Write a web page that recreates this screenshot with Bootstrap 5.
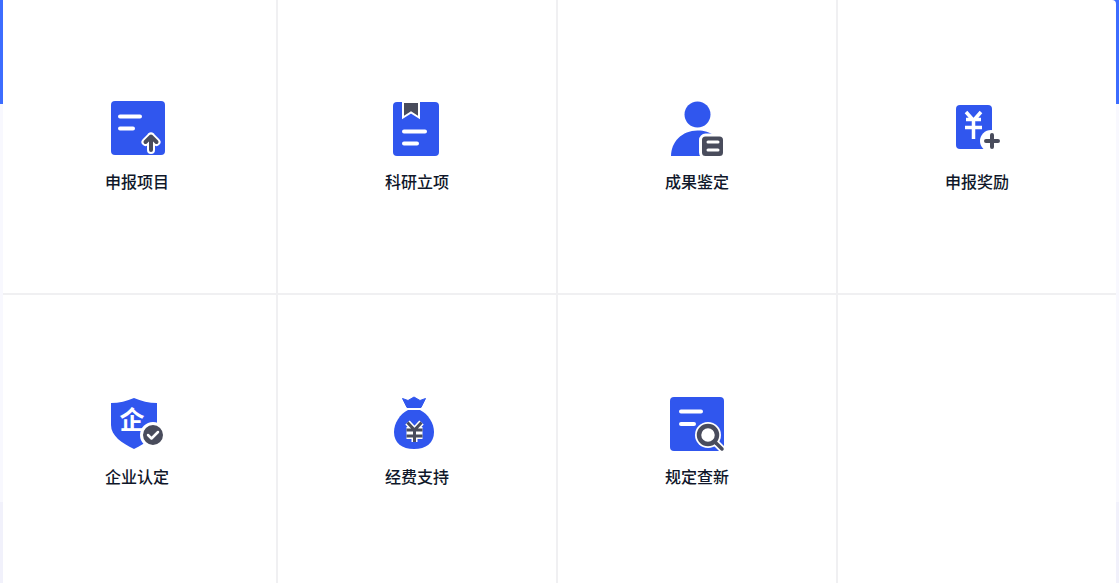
<!DOCTYPE html>
<html lang="zh-CN">
<head>
  <meta charset="UTF-8" />
  <title>申报入口</title>
  <meta name="viewport" content="width=device-width, initial-scale=1" />
  <link rel="stylesheet" href="https://cdn.jsdelivr.net/npm/bootstrap@5.3.0/dist/css/bootstrap.min.css" />
  <style>
    html, body { height: 100%; overflow: hidden; }
    body {
      background: linear-gradient(#3d6dff 104px, #f8f8fe 104px, #f8f8fe 502px, #f1f1fb 502px);
      font-family: "Noto Sans CJK SC", "Liberation Sans", sans-serif;
    }
    .entry-panel {
      height: 583px;
      margin: 0 3px;
      background: #fff;
      border-top-right-radius: 4px;
    }
    .entry-grid { width: 1120px; margin-left: -5px; }
    .entry-cell {
      width: 280px;
      height: 295px;
      padding-top: 96px;
      border-right: 2px solid #f0f0f2;
      border-bottom: 2px solid #f0f0f2;
    }
    .entry-cell svg { display: block; width: 64px; height: 64px; }
    .entry-name {
      margin-top: 9px;
      font-size: 16px;
      line-height: 24px;
      font-weight: 500;
      color: #0f172a;
    }
    .ic-blue { fill: #3056ee; }
    .ic-dark { fill: #494c5c; }
    .ic-line { stroke: #fff; stroke-width: 4; stroke-linecap: round; fill: none; }
    .ic-bar { stroke: #fff; stroke-width: 3; stroke-linecap: round; fill: none; }
    .ic-yen { stroke: #fff; stroke-width: 3.5; fill: none; }
    .ic-glyph { font: 700 25px "Noto Sans CJK SC", sans-serif; fill: #fff; text-anchor: middle; }
  </style>
</head>
<body>
  <div class="entry-panel overflow-hidden">
    <div class="entry-grid d-flex flex-wrap">

      <!-- 第一行 -->
      <div class="entry-cell d-flex flex-column align-items-center">
        <svg viewBox="105 96 64 64">
          <rect class="ic-blue" x="111" y="101" width="54" height="54" rx="4" />
          <path class="ic-line" d="M120 116.500h20M120 128.500h13" />
          <path d="M151 150V136.500M145.500 142l5.500-5.500 5.500 5.500" stroke="#fff" stroke-width="8" stroke-linecap="round" stroke-linejoin="round" fill="none" />
          <path d="M151 150V136.500M145.500 142l5.500-5.500 5.500 5.500" stroke="#494c5c" stroke-width="4" stroke-linecap="round" stroke-linejoin="round" fill="none" />
        </svg>
        <div class="entry-name">申报项目</div>
      </div>

      <div class="entry-cell d-flex flex-column align-items-center">
        <svg viewBox="385 96 64 64">
          <rect class="ic-blue" x="393" y="102" width="46" height="54" rx="4" />
          <path class="ic-dark" d="M403 102h16v15.500l-8-5-8 5z" stroke="#fff" stroke-width="2" />
          <path class="ic-line" d="M404 131.500h21M404 143.500h13" />
        </svg>
        <div class="entry-name">科研立项</div>
      </div>

      <div class="entry-cell d-flex flex-column align-items-center">
        <svg viewBox="665 96 64 64">
          <circle class="ic-blue" cx="697.500" cy="114.500" r="13" />
          <path class="ic-blue" d="M671 156c0-14 11-25.500 26.500-25.500 7 0 12 1.500 16.500 5V156z" />
          <rect class="ic-dark" x="700.500" y="135" width="24" height="22.500" rx="5" stroke="#fff" stroke-width="3" />
          <path class="ic-bar" d="M708 142h10M708 150h10" />
        </svg>
        <div class="entry-name">成果鉴定</div>
      </div>

      <div class="entry-cell d-flex flex-column align-items-center">
        <svg viewBox="945 96 64 64">
          <rect class="ic-blue" x="956" y="105" width="36" height="44" rx="4" />
          <path class="ic-yen" d="M966 112l7.500 8.500 7.500-8.500M966 119.500h15M965 127.500h17M973.500 120v19" />
          <circle cx="991" cy="141" r="11" fill="#fff" />
          <path d="M986 141h12M992 135v12" stroke="#494c5c" stroke-width="4" stroke-linecap="round" />
        </svg>
        <div class="entry-name">申报奖励</div>
      </div>

      <!-- 第二行 -->
      <div class="entry-cell d-flex flex-column align-items-center">
        <svg viewBox="105 391 64 64">
          <path class="ic-blue" d="M111 403c8 0 16-2 23-5 7 3 15 5 23 5v22c0 11-11 18-23 24-12-6-23-13-23-24z" />
          <text class="ic-glyph" x="132" y="429">企</text>
          <circle class="ic-dark" cx="153" cy="435" r="11.500" stroke="#fff" stroke-width="3" />
          <path d="M148 435l3.500 3.500 6.500-6.500" stroke="#fff" stroke-width="2.500" stroke-linecap="round" stroke-linejoin="round" fill="none" />
        </svg>
        <div class="entry-name">企业认定</div>
      </div>

      <div class="entry-cell d-flex flex-column align-items-center">
        <svg viewBox="385 391 64 64">
          <path class="ic-blue" d="M402.500 398.500l5.500 2 6-3.500 6 3.500 5.500-2-4.500 9h-14z" stroke="#3056ee" stroke-width="1" stroke-linejoin="round" />
          <path class="ic-blue" d="M408 410h12c8 4 14 13 14 22 0 11-8 17-20 17s-20-6-20-17c0-9 6-18 14-22z" />
          <path d="M407.500 422.500l7 7.500 7-7.500M406.500 430h16M406.500 436h16M414.500 430v12" stroke="#fff" stroke-width="6" fill="none" />
          <path d="M407.500 422.500l7 7.500 7-7.500M406.500 430h16M406.500 436h16M414.500 430v12" stroke="#494c5c" stroke-width="3" fill="none" />
        </svg>
        <div class="entry-name">经费支持</div>
      </div>

      <div class="entry-cell d-flex flex-column align-items-center">
        <svg viewBox="665 391 64 64">
          <rect class="ic-blue" x="670" y="397" width="54" height="54" rx="4" />
          <path class="ic-line" d="M681 411.500h20M681 424h13" />
          <circle cx="708" cy="435" r="13" fill="#fff" />
          <path d="M716 443l6 6" stroke="#fff" stroke-width="7" stroke-linecap="round" />
          <circle cx="708" cy="435" r="9" fill="#fff" stroke="#494c5c" stroke-width="4.500" />
          <path d="M716 443l6 6" stroke="#494c5c" stroke-width="3.500" stroke-linecap="round" />
        </svg>
        <div class="entry-name">规定查新</div>
      </div>

      <div class="entry-cell"></div>
    </div>
  </div>

  <script src="https://cdn.jsdelivr.net/npm/bootstrap@5.3.0/dist/js/bootstrap.bundle.min.js"></script>
</body>
</html>
